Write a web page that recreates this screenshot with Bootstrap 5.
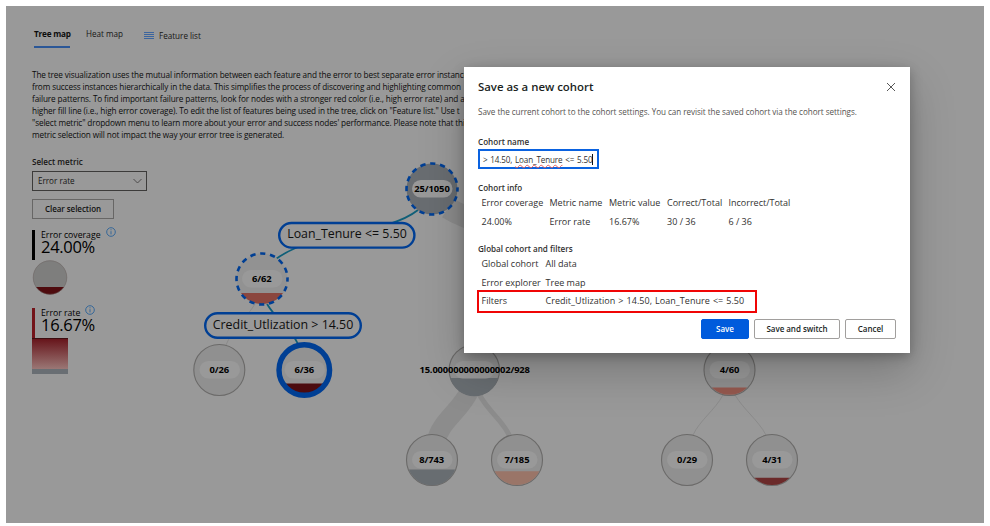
<!DOCTYPE html>
<html lang="en">
<head>
<meta charset="utf-8">
<meta name="viewport" content="width=device-width, initial-scale=1">
<title>Error analysis - Save as a new cohort</title>
<link href="https://cdn.jsdelivr.net/npm/bootstrap@5.3.0/dist/css/bootstrap.min.css" rel="stylesheet">
<style>
  body { font-family: "Open Sans", "Noto Sans", sans-serif; font-size: 8.1px; line-height: 12px; color: #161514; background: #fff; overflow: hidden; }
  .page-area { margin: 6px 6px 0; height: 517px; background: #999; }
  .side { padding: 22px 0 0 26px; width: 458px; }
  .tabs { height: 20px; padding-left: 2px; }
  .tab-on { width: 36px; height: 20px; border-bottom: 2px solid #2b5797; font-weight: 700; font-size: 8.2px; letter-spacing: -.22px; color: #0c0c0c; }
  .tab-off { margin-left: 16px; width: 58px; }
  .feature { padding-top: 2px; gap: 5px; }
  .intro { margin-top: 21px; font-size: 8.2px; letter-spacing: -.12px; line-height: 12.05px; height: 72px; color: #0c0c0c; }
  .sb { font-weight: 600; }
  .metric-label { margin-top: 15px; font-size: 8.1px; }
  .metric-select { width: 115px; height: 20px; margin-top: 3px; border: 1px solid #3c3b3a; background: transparent; padding: 0 4px 0 5px; }
  .clear-btn { width: 82px; height: 20px; margin-top: 8px; border: 1px solid #676665; border-radius: 0; padding: 0; font-size: 8.02px; letter-spacing: -.05px; line-height: 18px; font-weight: 600; color: #111; }
  .gauge { height: 30px; border-left: 3px solid #000; padding-left: 6px; color: #000; }
  .gauge-cov { margin-top: 11px; }
  .gauge-rate { margin-top: 13px; border-color: #731319; }
  .gauge-name { font-size: 8.7px; font-weight: 500; line-height: 10px; height: 9px; }
  .gauge-num { font-size: 16.5px; line-height: 16px; letter-spacing: -.3px; }
  .info { margin: -3px 0 0 5px; }
  .ramp { width: 36px; height: 36px; border-top: 1px solid #3b0d10; border-bottom: 5px solid #696e73; background: linear-gradient(#67151b, #9a7775); }
  .tree { left: 0; top: 0; }
  .tree text { font-weight: 700; font-size: 9.4px; text-anchor: middle; fill: #000; }
  .tree .edge-text { font-weight: 400; font-size: 12.4px; fill: #0e0e0e; }
  .dialog-box { left: 464px; top: 67px; width: 446px; height: 286px; background: #fff; color: #323130; padding: 12px 14px 14px; box-shadow: 0 18px 42px rgba(0,0,0,.22), 0 3px 11px rgba(0,0,0,.25); }
  .dlg-title { font-size: 11.4px; font-weight: 600; line-height: 15px; color: #201f1e; margin: 0; }
  .dlg-sub { font-size: 8.1px; letter-spacing: -.045px; color: #55534f; margin: 12px 0 18px; }
  .dlg-label { font-size: 8.1px; font-weight: 600; }
  .name-field { width: 121px; height: 20px; border: 2px solid #0a62e0; padding: 1px 3px; margin: 1px 0 13px; font-size: 8.1px; letter-spacing: -.13px; word-spacing: .8px; line-height: 15px; white-space: nowrap; }
  .typo { text-decoration: underline wavy #e5605c .6px; text-underline-offset: 1px; text-decoration-skip-ink: none; }
  .caret { width: 1px; height: 11px; background: #111; }
  .info-grid { display: grid; grid-template-columns: 68px 59.5px 58px 61.5px auto; grid-auto-rows: 18.5px; margin-bottom: 12px; padding-left: 3.5px; font-size: 9px; line-height: 18.5px; white-space: nowrap; }
  .kv { display: grid; grid-template-columns: 64px auto; padding-left: 3.5px; font-size: 9px; line-height: 18.5px; height: 18.5px; white-space: nowrap; }
  .kv-hot { border: 2px solid #f00505; width: 280px; height: 23px; margin: -2px 0 0 -1px; padding-left: 2.5px; line-height: 18px; letter-spacing: .03px; word-spacing: .7px; }
  .dlg-actions { gap: 5px; margin-top: 6px; }
  .dlg-btn { height: 20px; border-radius: 2px; border: 1px solid #a19f9d; padding: 0; font-size: 8.02px; letter-spacing: -.05px; line-height: 18px; font-weight: 600; color: #201f1e; }
  .dlg-btn-main { background: #005bdc; border-color: #005bdc; color: #fff; }
  .w-save { width: 48px; } .w-switch { width: 86px; } .w-cancel { width: 51px; }
</style>
<script src="https://cdn.jsdelivr.net/npm/bootstrap@5.3.0/dist/js/bootstrap.bundle.min.js"></script>
</head>
<body>
<main class="page-area">
  <div class="side d-flex flex-column align-items-start text-nowrap">
    <div class="tabs d-flex">
      <div class="tab-on">Tree map</div>
      <div class="tab-off">Heat map</div>
      <div class="feature d-flex"><svg width="10" height="12" viewBox="0 0 10 12" stroke="#315f9e" stroke-width="1"><path d="M0 2.500h10M0 4.500h10M0 6.500h10M0 8.500h10" stroke-width=".9"/></svg><span>Feature list</span></div>
    </div>
    <div class="intro">The tree visualization uses the mutual information between each feature and the error to best separate error instance<br>from success instances hierarchically in the data. This simplifies the process of discovering and highlighting common<br>failure patterns. To find important failure patterns, look for nodes with a stronger red color (i.e., high error rate) and a<br>higher fill line (i.e., high error coverage). To edit the list of features being used in the tree, click on "Feature list." Use t<br>"select metric" dropdown menu to learn more about your error and success nodes' performance. Please note that thi<br>metric selection will not impact the way your error tree is generated.</div>
    <div class="metric-label sb">Select metric</div>
    <div class="metric-select d-flex align-items-center justify-content-between"><span>Error rate</span><svg width="9" height="6" viewBox="0 0 9 6" fill="none" stroke="#454443" stroke-width=".9"><path d="M.5 1l4 4 4-4"/></svg></div>
    <button class="btn clear-btn">Clear selection</button>
    <div class="gauge gauge-cov">
      <div class="gauge-name d-flex"><span>Error coverage</span><svg class="info" width="10" height="10" viewBox="0 0 10 10" fill="none" stroke="#2a6299" stroke-width=".9"><circle cx="5" cy="5" r="4.3"/><path d="M5 4.2v3.2M5 2.3v1"/></svg></div>
      <div class="gauge-num">24.00%</div>
    </div>
    <svg width="36" height="35" viewBox="0 0 36 35"><circle cx="18" cy="17.5" r="17" fill="#7e7e7d"/><path d="M3.9 27h28.2A17 17 0 0 1 3.9 27z" fill="#4e0b0e"/><circle cx="18" cy="17.5" r="16.8" fill="none" stroke="#6c6361" stroke-width=".5"/></svg>
    <div class="gauge gauge-rate">
      <div class="gauge-name d-flex"><span>Error rate</span><svg class="info" width="10" height="10" viewBox="0 0 10 10" fill="none" stroke="#2a6299" stroke-width=".9"><circle cx="5" cy="5" r="4.3"/><path d="M5 4.2v3.2M5 2.3v1"/></svg></div>
      <div class="gauge-num">16.67%</div>
    </div>
    <div class="ramp"></div>
  </div>
</main>

<svg class="tree position-absolute" width="990" height="526" viewBox="0 0 990 526">
  <g fill="none">
    <path d="M448 208C470 222 500 227 530 232" stroke="#8c8c8c" stroke-width="22"/>
    <path d="M418 210C385 236 315 230 276 259" stroke="#0f5f78" stroke-width="1.8"/>
    <path d="M255 304C245 320 232 330 226 345" stroke="#8b8b8b"/>
    <path d="M267 304C278 322 291 328 298 344" stroke="#0f5f78" stroke-width="1.8"/>
    <path d="M470 390C460 412 440 421 436 442" stroke="#8c8c8c" stroke-width="19"/>
    <path d="M479 394C490 414 503 420 510 437" stroke="#8c8c8c" stroke-width="5"/>
    <path d="M723 395C715 410 700 420 693 435" stroke="#8b8b8b"/>
    <path d="M735 395C744 410 758 420 766 435" stroke="#8b8b8b"/>
  </g>
  <g stroke="#6b6a69" stroke-width="1.1">
    <circle cx="432" cy="189" r="25.5" fill="#696d71" stroke="none"/>
    <circle cx="262" cy="279" r="25.5" fill="#929292" stroke="none"/>
    <circle cx="219.3" cy="370" r="25.5" fill="#909090"/>
    <circle cx="304.3" cy="370" r="25.5" fill="#929292"/>
    <circle cx="474.3" cy="370" r="25.2" fill="#909090"/>
    <circle cx="729.5" cy="370" r="25.5" fill="#909090"/>
    <circle cx="432" cy="460" r="25.5" fill="#909090"/>
    <circle cx="517" cy="460" r="25.5" fill="#909090"/>
    <circle cx="687" cy="460" r="25.5" fill="#909090"/>
    <circle cx="772" cy="460" r="25.5" fill="#909090"/>
  </g>
  <path d="M241 293H283A25.5 25.5 0 0 1 241 293z" fill="#8b463e"/>
  <path d="M284.5 383.5H324A24 24 0 0 1 284.5 383.5z" fill="#4c0b0f"/>
  <path d="M450.2 378H498.4A25 25 0 0 1 450.2 378z" fill="#686d71"/>
  <path d="M408.8 469.5H455.2A25 25 0 0 1 408.8 469.5z" fill="#686d71"/>
  <path d="M494.6 471.2H539.4A25 25 0 0 1 494.6 471.2z" fill="#9a7568"/>
  <path d="M711.8 387.5H747.2A25 25 0 0 1 711.8 387.5z" fill="#95594f"/>
  <path d="M754.3 477.7H789.7A25 25 0 0 1 754.3 477.7z" fill="#6b2a2a"/>
  <g fill="none" stroke="#003f94">
    <circle cx="432" cy="189" r="25.5" stroke-width="2.6" stroke-dasharray="5.3 4.71" stroke-dashoffset="2.6"/>
    <circle cx="262" cy="279" r="25.5" stroke-width="2.6" stroke-dasharray="5.3 4.71" stroke-dashoffset="2.6"/>
    <circle cx="304.3" cy="370" r="25.3" stroke-width="5.4"/>
  </g>
  <g fill="#999">
    <rect x="412" y="180" width="40.500" height="17.500" rx="8.750"/>
    <rect x="242" y="270" width="40.500" height="17.500" rx="8.750"/>
    <rect x="199.500" y="361" width="40.500" height="17.500" rx="8.750"/>
    <rect x="284.500" y="361" width="40.500" height="17.500" rx="8.750"/>
    <rect x="454" y="361" width="40.500" height="17.500" rx="8.750"/>
    <rect x="709.500" y="361" width="40.500" height="17.500" rx="8.750"/>
    <rect x="412" y="451" width="40.500" height="17.500" rx="8.750"/>
    <rect x="497" y="451" width="40.500" height="17.500" rx="8.750"/>
    <rect x="667" y="451" width="40.500" height="17.500" rx="8.750"/>
    <rect x="752" y="451" width="40.500" height="17.500" rx="8.750"/>
  </g>
  <g fill="#999" stroke="#003f94" stroke-width="2.4">
    <rect x="279.200" y="223" width="135.200" height="24.600" rx="12.300"/>
    <rect x="205.200" y="313.200" width="155.600" height="24.600" rx="12.300"/>
  </g>
  <text class="edge-text" x="347" y="238.200" textLength="119.500" lengthAdjust="spacingAndGlyphs">Loan_Tenure &lt;= 5.50</text>
  <text class="edge-text" x="283" y="328.500" textLength="140.500" lengthAdjust="spacingAndGlyphs">Credit_Utlization &gt; 14.50</text>
  <text x="432" y="192.200" textLength="35.500">25/1050</text>
  <text x="261.800" y="282.400" textLength="19.500">6/62</text>
  <text x="219.300" y="373" textLength="19.500">0/26</text>
  <text x="304.300" y="373" textLength="19.500">6/36</text>
  <text x="474.700" y="373" textLength="110.500">15.000000000000002/928</text>
  <text x="729.500" y="373" textLength="19.500">4/60</text>
  <text x="431.700" y="463.200" textLength="25">8/743</text>
  <text x="517" y="463.200" textLength="25">7/185</text>
  <text x="687" y="463.200" textLength="20">0/29</text>
  <text x="772" y="463.200" textLength="19.500">4/31</text>
</svg>

<section class="dialog-box position-absolute" role="dialog" aria-label="Save as a new cohort">
  <div class="d-flex justify-content-between align-items-center">
    <h1 class="dlg-title">Save as a new cohort</h1>
    <svg width="10" height="10" viewBox="0 0 10 10" stroke="#444" stroke-width=".9"><path d="M1 1l8 8M9 1l-8 8"/></svg>
  </div>
  <div class="dlg-sub text-nowrap">Save the current cohort to the cohort settings. You can revisit the saved cohort via the cohort settings.</div>
  <div class="dlg-label">Cohort name</div>
  <div class="name-field d-flex align-items-center"><span>&gt; 14.50, <span class="typo">Loan_Tenure</span> &lt;= 5.50</span><span class="caret"></span></div>
  <div class="dlg-label">Cohort info</div>
  <div class="info-grid">
    <span>Error coverage</span><span>Metric name</span><span>Metric value</span><span>Correct/Total</span><span>Incorrect/Total</span>
    <span>24.00%</span><span>Error rate</span><span>16.67%</span><span>30 / 36</span><span>6 / 36</span>
  </div>
  <div class="dlg-label">Global cohort and filters</div>
  <div class="kv"><span>Global cohort</span><span>All data</span></div>
  <div class="kv"><span>Error explorer</span><span>Tree map</span></div>
  <div class="kv kv-hot"><span>Filters</span><span>Credit_Utlization &gt; 14.50, Loan_Tenure &lt;= 5.50</span></div>
  <div class="dlg-actions d-flex justify-content-end">
    <button class="btn dlg-btn dlg-btn-main w-save">Save</button>
    <button class="btn dlg-btn w-switch">Save and switch</button>
    <button class="btn dlg-btn w-cancel">Cancel</button>
  </div>
</section>
</body>
</html>
